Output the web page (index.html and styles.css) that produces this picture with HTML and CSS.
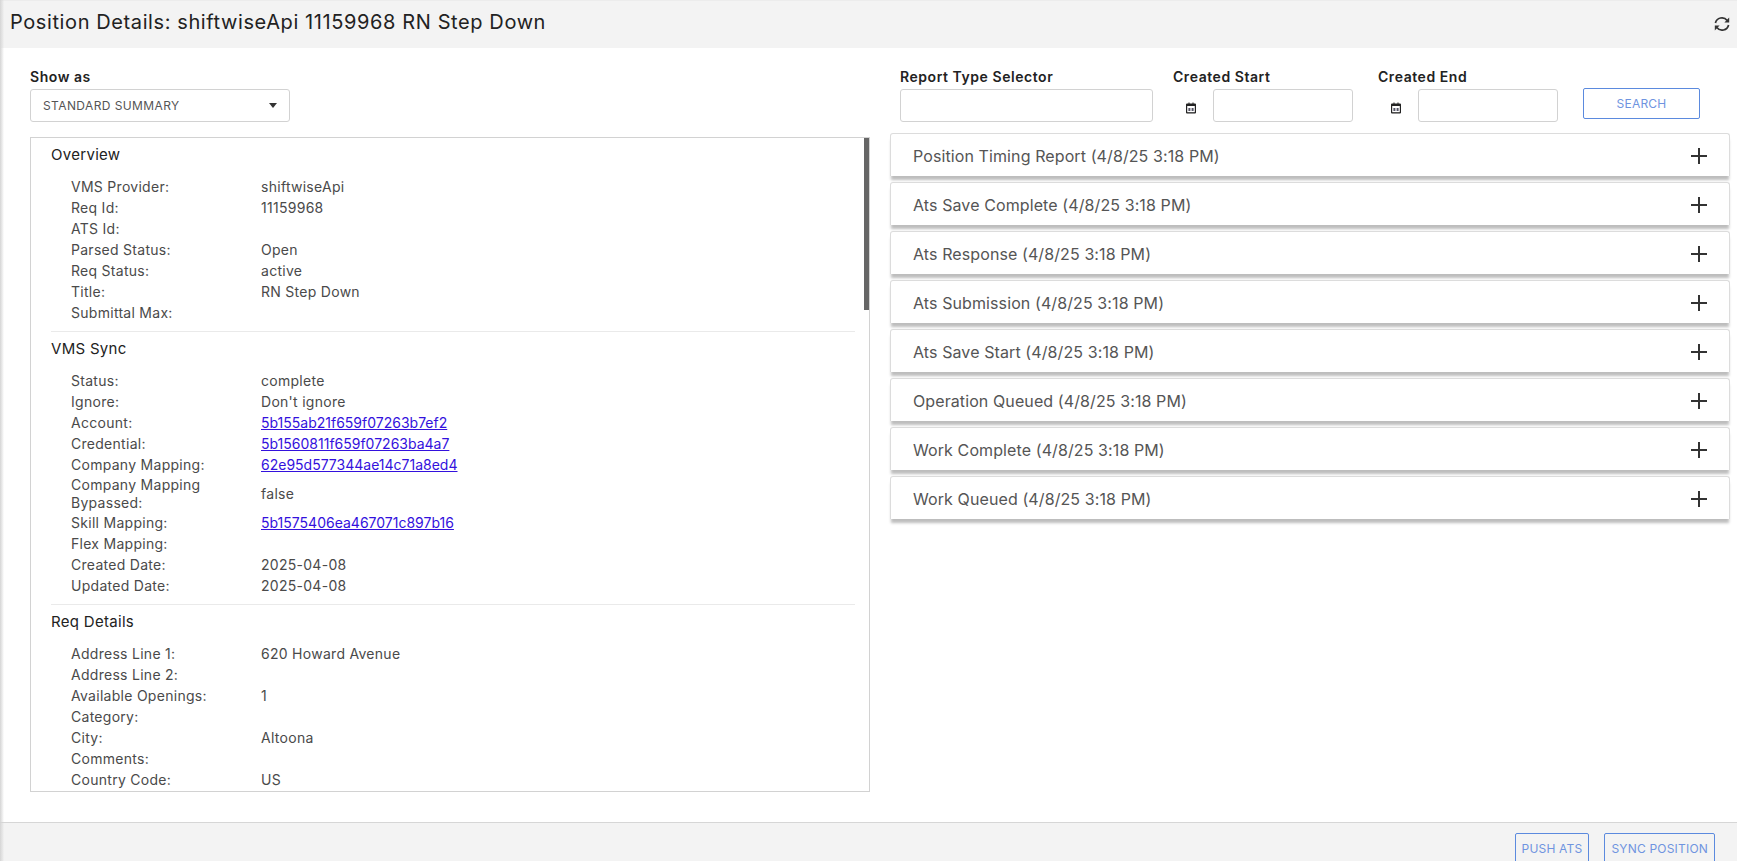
FILE: index.html
```html
<!DOCTYPE html>
<html lang="en">
<head>
<meta charset="utf-8">
<title>Position Details</title>
<link rel="stylesheet" href="styles.css">
</head>
<body>
<div class="edge"></div>
<header class="topbar">
  <h1>Position Details: shiftwiseApi 11159968 RN Step Down</h1>
  <svg class="refresh" viewBox="0 0 16 16" width="16" height="16" fill="none" stroke="#333" stroke-width="1.7"><path d="M1.4 7A6.7 6.7 0 0 1 13.2 4.4"/><path d="M15.2 1.6v4.8h-4.8z" fill="#333" stroke="none"/><path d="M14.6 9A6.7 6.7 0 0 1 2.8 11.6"/><path d="M.8 14.4V9.6h4.8z" fill="#333" stroke="none"/></svg>
</header>
<main class="content">
  <section class="left">
    <div class="field">
      <label class="lbl">Show as</label>
      <div class="select"><span>STANDARD SUMMARY</span><i class="caret"></i></div>
    </div>
    <div class="panel">
      <div class="thumb"></div>
      <div class="group">
        <h2>Overview</h2>
        <dl>
          <div class="row"><dt>VMS Provider:</dt><dd>shiftwiseApi</dd></div>
          <div class="row"><dt>Req Id:</dt><dd>11159968</dd></div>
          <div class="row"><dt>ATS Id:</dt><dd></dd></div>
          <div class="row"><dt>Parsed Status:</dt><dd>Open</dd></div>
          <div class="row"><dt>Req Status:</dt><dd>active</dd></div>
          <div class="row"><dt>Title:</dt><dd>RN Step Down</dd></div>
          <div class="row"><dt>Submittal Max:</dt><dd></dd></div>
        </dl>
      </div>
      <div class="group">
        <h2>VMS Sync</h2>
        <dl>
          <div class="row"><dt>Status:</dt><dd>complete</dd></div>
          <div class="row"><dt>Ignore:</dt><dd>Don't ignore</dd></div>
          <div class="row"><dt>Account:</dt><dd><a href="#">5b155ab21f659f07263b7ef2</a></dd></div>
          <div class="row"><dt>Credential:</dt><dd><a href="#">5b1560811f659f07263ba4a7</a></dd></div>
          <div class="row"><dt>Company Mapping:</dt><dd><a href="#">62e95d577344ae14c71a8ed4</a></dd></div>
          <div class="row tall"><dt>Company Mapping Bypassed:</dt><dd>false</dd></div>
          <div class="row"><dt>Skill Mapping:</dt><dd><a href="#">5b1575406ea467071c897b16</a></dd></div>
          <div class="row"><dt>Flex Mapping:</dt><dd></dd></div>
          <div class="row"><dt>Created Date:</dt><dd>2025-04-08</dd></div>
          <div class="row"><dt>Updated Date:</dt><dd>2025-04-08</dd></div>
        </dl>
      </div>
      <div class="group">
        <h2>Req Details</h2>
        <dl>
          <div class="row"><dt>Address Line 1:</dt><dd>620 Howard Avenue</dd></div>
          <div class="row"><dt>Address Line 2:</dt><dd></dd></div>
          <div class="row"><dt>Available Openings:</dt><dd>1</dd></div>
          <div class="row"><dt>Category:</dt><dd></dd></div>
          <div class="row"><dt>City:</dt><dd>Altoona</dd></div>
          <div class="row"><dt>Comments:</dt><dd></dd></div>
          <div class="row"><dt>Country Code:</dt><dd>US</dd></div>
        </dl>
      </div>
    </div>
  </section>
  <section class="right">
    <div class="filters">
      <div class="field f-type">
        <label class="lbl">Report Type Selector</label>
        <div class="input"></div>
      </div>
      <div class="field f-date">
        <label class="lbl">Created Start</label>
        <div class="date-line">
          <svg class="cal" viewBox="0 0 12 12" width="12" height="12"><path d="M2 1.5h1.5V.5h1v1h3V.5h1v1H10a1 1 0 0 1 1 1v8a1 1 0 0 1-1 1H2a1 1 0 0 1-1-1v-8a1 1 0 0 1 1-1z" fill="#222"/><rect x="2.2" y="4" width="7.6" height="6.2" fill="#fff"/><rect x="3.4" y="6" width="2" height="3" fill="#556"/><rect x="6.6" y="6" width="2" height="3" fill="#556"/></svg>
          <div class="input"></div>
        </div>
      </div>
      <div class="field f-date">
        <label class="lbl">Created End</label>
        <div class="date-line">
          <svg class="cal" viewBox="0 0 12 12" width="12" height="12"><path d="M2 1.5h1.5V.5h1v1h3V.5h1v1H10a1 1 0 0 1 1 1v8a1 1 0 0 1-1 1H2a1 1 0 0 1-1-1v-8a1 1 0 0 1 1-1z" fill="#222"/><rect x="2.2" y="4" width="7.6" height="6.2" fill="#fff"/><rect x="3.4" y="6" width="2" height="3" fill="#556"/><rect x="6.6" y="6" width="2" height="3" fill="#556"/></svg>
          <div class="input"></div>
        </div>
      </div>
      <button class="btn search" type="button">SEARCH</button>
    </div>
    <div class="accordion">
      <div class="card"><span>Position Timing Report (4/8/25 3:18 PM)</span><i class="plus"></i></div>
      <div class="card"><span>Ats Save Complete (4/8/25 3:18 PM)</span><i class="plus"></i></div>
      <div class="card"><span>Ats Response (4/8/25 3:18 PM)</span><i class="plus"></i></div>
      <div class="card"><span>Ats Submission (4/8/25 3:18 PM)</span><i class="plus"></i></div>
      <div class="card"><span>Ats Save Start (4/8/25 3:18 PM)</span><i class="plus"></i></div>
      <div class="card"><span>Operation Queued (4/8/25 3:18 PM)</span><i class="plus"></i></div>
      <div class="card"><span>Work Complete (4/8/25 3:18 PM)</span><i class="plus"></i></div>
      <div class="card"><span>Work Queued (4/8/25 3:18 PM)</span><i class="plus"></i></div>
    </div>
  </section>
</main>
<footer class="bottombar">
  <button class="btn" type="button">PUSH ATS</button>
  <button class="btn" type="button">SYNC POSITION</button>
</footer>
</body>
</html>
```
FILE: styles.css
```css
* { box-sizing: border-box; }
html, body { margin: 0; height: 100%; }
body {
  height: 861px;
  overflow: hidden;
  display: flex;
  flex-direction: column;
  background: #fff;
  color: #333;
  font-family: Inter, "Open Sans", sans-serif;
  font-size: 14px;
}
.edge {
  position: fixed;
  left: 0; top: 0; bottom: 0;
  width: 4px;
  background: linear-gradient(to right, #d4d4d4, rgba(240,240,240,0));
  z-index: 5;
}
.topbar {
  height: 48px;
  flex: none;
  display: flex;
  align-items: center;
  justify-content: space-between;
  padding: 0 7px 5px 10px;
  background: #f3f3f3;
  border-top: 1px solid #ececec;
}
.topbar h1 { margin: 0; font-size: 20px; font-weight: 400; color: #222; letter-spacing: 0.6px; }
.refresh { margin-top: 4px; }
.content {
  flex: 1;
  min-height: 0;
  display: flex;
  padding: 0 7px 0 30px;
  gap: 20px;
}
.left { width: 840px; flex: none; padding-top: 20px; }
.right { flex: 1; min-width: 0; padding-top: 20px; }
.field { display: flex; flex-direction: column; }
.lbl { font-size: 14px; font-weight: 600; color: #222; line-height: 17px; margin-bottom: 4px; height: 17px; letter-spacing: 0.55px; white-space: nowrap; }
.select {
  width: 260px;
  height: 33px;
  border: 1px solid #d2d2d2;
  border-radius: 3px;
  padding: 0 12px;
  display: flex;
  align-items: center;
  justify-content: space-between;
  font-size: 12px;
  color: #555;
  letter-spacing: 0.4px;
}
.caret { width: 0; height: 0; border: 4px solid transparent; border-top: 5px solid #333; border-bottom: 0; }
.panel {
  position: relative;
  margin-top: 15px;
  height: 655px;
  border: 1px solid #d2d2d2;
  padding: 0 14px 0 20px;
  overflow: hidden;
}
.thumb { position: absolute; right: 0; top: 0; width: 5px; height: 172px; background: #666; }
.group { border-bottom: 1px solid #eaeaea; padding: 6px 0 8px; }
.group:last-child { border-bottom: 0; }
.group h2 { margin: 0 0 11px; font-size: 15px; font-weight: 400; line-height: 21px; color: #222; letter-spacing: 0.3px; }
dl { margin: 0; padding-left: 20px; }
.row { display: flex; align-items: center; min-height: 21px; line-height: 21px; font-size: 14px; color: #4a4a4a; letter-spacing: 0.28px; }
.row.tall { min-height: 37px; }
dt { width: 190px; flex: none; padding-right: 30px; }
.tall dt { line-height: 18px; height: 37px; padding-top: 1px; }
dd { margin: 0; }
a { color: #3311dd; letter-spacing: 0; }
.filters { display: flex; height: 65px; padding-left: 10px; }
.f-type { width: 253px; margin-right: 20px; }
.f-date { width: 205px; }
.date-line { display: flex; align-items: center; }
.cal { margin: 4px 16px 0 12px; flex: none; }
.input { height: 33px; border: 1px solid #d2d2d2; border-radius: 3px; width: 100%; background: #fff; }
.f-date .input { width: 140px; }
.btn {
  height: 31px;
  background: transparent;
  border: 1px solid #5b8ade;
  border-radius: 2px;
  color: #6f94e0;
  font-family: inherit;
  font-size: 12px;
  padding: 0 6px;
  letter-spacing: 0.2px;
}
.search { width: 117px; margin-top: 20px; }
.accordion { display: flex; flex-direction: column; gap: 6px; }
.card {
  height: 43px;
  display: flex;
  align-items: center;
  justify-content: space-between;
  padding: 2px 22px 0 22px;
  border: 1px solid #dcdcdc;
  border-bottom: 0;
  border-radius: 3px 3px 0 0;
  background: #fff;
  box-shadow: 0 5px 3px -1px #bdbdbd;
  font-size: 16px;
  color: #555;
  letter-spacing: 0.1px;
}
.plus { position: relative; width: 16px; height: 16px; flex: none; }
.plus::before, .plus::after { content: ""; position: absolute; background: #333; }
.plus::before { left: 0; right: 0; top: 7px; height: 2px; }
.plus::after { top: 0; bottom: 0; left: 7px; width: 2px; }
.bottombar {
  height: 39px;
  flex: none;
  display: flex;
  justify-content: flex-end;
  gap: 15px;
  padding: 10px 22px 0 0;
  background: #f3f3f3;
  border-top: 1px solid #d6d6d6;
  overflow: hidden;
}
.bottombar .btn { flex: none; }
```
